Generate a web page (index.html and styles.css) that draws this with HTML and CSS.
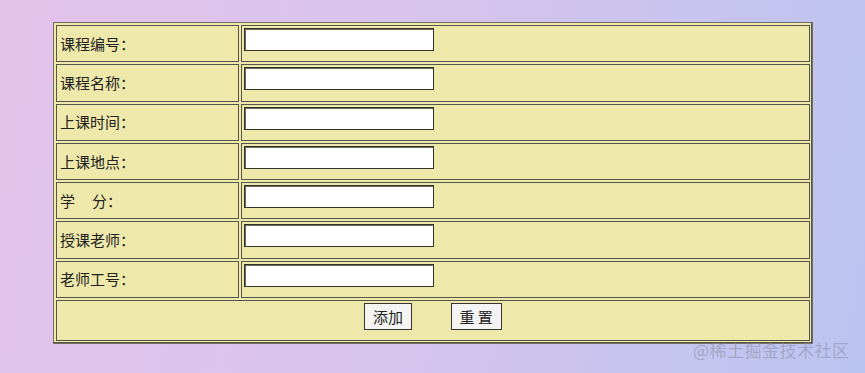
FILE: index.html
```html
<!DOCTYPE html>
<html lang="zh-CN">
<head>
  <meta charset="UTF-8" />
  <meta name="viewport" content="width=device-width, initial-scale=1.0"/>
  <title>添加课程</title>
  <link rel="stylesheet" href="styles.css">
</head>
<body>
  <form id="course-form">
    <table class="course-table">
      <tr>
        <td class="label">课程编号：</td>
        <td class="field"><input type="text" name="cno" /></td>
      </tr>
      <tr>
        <td class="label">课程名称：</td>
        <td class="field"><input type="text" name="cname" /></td>
      </tr>
      <tr>
        <td class="label">上课时间：</td>
        <td class="field"><input type="text" name="ctime" /></td>
      </tr>
      <tr>
        <td class="label">上课地点：</td>
        <td class="field"><input type="text" name="cplace" /></td>
      </tr>
      <tr>
        <td class="label">学<span class="gap"></span>分：</td>
        <td class="field"><input type="text" name="credit" /></td>
      </tr>
      <tr>
        <td class="label">授课老师：</td>
        <td class="field"><input type="text" name="tname" /></td>
      </tr>
      <tr>
        <td class="label">老师工号：</td>
        <td class="field"><input type="text" name="tno" /></td>
      </tr>
      <tr>
        <td class="actions" colspan="2">
          <button type="submit">添加</button>
          <button type="reset">重 置</button>
        </td>
      </tr>
    </table>
  </form>
  <div class="watermark">@稀土掘金技术社区</div>
</body>
</html>
```

FILE: styles.css
```css
html, body {
  height: 100%;
}

body {
  margin: 0;
  padding: 22px 0 0 53px;
  box-sizing: border-box;
  background: linear-gradient(100deg, #e4c2ea, #d6c4ec 50%, #bac4f0);
  font-family: "Noto Sans CJK SC", "Noto Sans", sans-serif;
  font-size: 15px;
  color: #222;
  position: relative;
}

.course-table {
  width: 760px;
  border-collapse: separate;
  border-spacing: 2px;
  border: 1px solid #6e6e62;
  box-shadow: inset -1px -1px 0 #55554a;
  background: #eee8aa;
}

.course-table td {
  border: 1px solid #55554a;
  height: 35.3px;
  padding: 0;
}

.label {
  width: 178px;
  padding-left: 3px !important;
  vertical-align: middle;
  line-height: 20px;
}

.gap {
  display: inline-block;
  width: 17px;
}

.field {
  vertical-align: top;
}

.field input {
  display: block;
  margin: 2px 0 0 2px;
  width: 190px;
  height: 23px;
  box-sizing: border-box;
  border: 1px solid #333328;
  box-shadow: inset 1px 1px 0 #6a6a60;
  background: #fff;
  padding: 1px 3px;
  font-size: 14px;
}

.actions {
  text-align: center;
  vertical-align: top;
  height: 39px !important;
}

.actions button {
  margin-top: 2px;
  height: 27px;
  padding: 0 8px;
  border: 1px solid #333;
  background: #f4f4f2;
  font-family: inherit;
  font-size: 15px;
  line-height: 25px;
  color: #222;
  cursor: pointer;
}

.actions button + button {
  margin-left: 35px;
}

.watermark {
  position: absolute;
  left: 693px;
  top: 337px;
  font-size: 17px;
  color: rgba(140, 140, 160, 0.55);
  letter-spacing: 0.5px;
}
```
